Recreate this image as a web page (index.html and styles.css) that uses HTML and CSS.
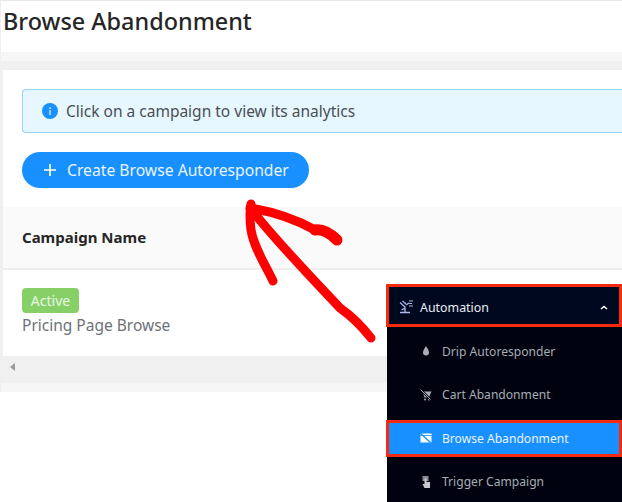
FILE: index.html
```html
<!DOCTYPE html>
<html lang="en">
<head>
<meta charset="utf-8">
<title>Browse Abandonment</title>
<link rel="stylesheet" href="styles.css">
</head>
<body>
<div class="page">
  <header class="page-header"><h1>Browse Abandonment</h1></header>
  <div class="band-dotted"></div>
  <main class="content">
    <section class="card">
      <div class="card-top">
        <div class="alert">
          <svg class="alert-icon" viewBox="0 0 16 16"><circle cx="8" cy="8" r="8" fill="#1890ff"/><rect x="7.1" y="7" width="1.8" height="5" fill="#a9d6ff"/><rect x="7.1" y="4.2" width="1.8" height="1.8" fill="#a9d6ff"/></svg>
          <span>Click on a campaign to view its analytics</span>
        </div>
        <button class="create-btn">
          <svg class="plus" viewBox="0 0 12 12"><path d="M6 0v12M0 6h12" stroke="#fff" stroke-width="1.7" fill="none"/></svg>
          <span>Create Browse Autoresponder</span>
        </button>
      </div>
      <div class="table-head">Campaign Name</div>
      <div class="table-row">
        <span class="badge">Active</span>
        <span class="campaign">Pricing Page Browse</span>
      </div>
    </section>
    <div class="scrollbar"><svg class="scroll-arrow" viewBox="0 0 5 8"><path d="M5 0v8L0 4z" fill="#999"/></svg></div>
  </main>
  <div class="band-dotted bottom"></div>
</div>

<svg class="arrow" viewBox="0 0 150 170">
  <g fill="none" stroke="#f00" stroke-linecap="round" stroke-linejoin="round">
    <path stroke-width="9" d="M21 14 C19 24 20 32 21 40 C24 58 35 74 43 91"/>
    <path stroke-width="9" d="M20 18 C45 22 65 29 85 40"/>
    <path stroke-width="11" d="M85 40 C92 39 100 43 107 50"/>
    <path stroke-width="9" d="M25 24 C50 55 78 84 110 118 C120 125 130 134 141 148"/>
  </g>
</svg>

<nav class="sidebar">
  <div class="nav-item parent">
    <svg class="nav-icon" viewBox="0 0 15 14"><path d="M1 2.500l5 4.500v5M1 12.500h10M6 8L2.500 10M3.500 1l3.500 3M7 5l3-2" stroke="#a9b8e8" stroke-width="1.300" fill="none"/><path d="M10 1h4M10 3.500h3M10 6h4" stroke="#a9b8e8" stroke-width="1.100" fill="none"/></svg>
    <span class="nav-label">Automation</span>
    <svg class="chevron" viewBox="0 0 8 5"><path d="M1 4l3-2.500L7 4" stroke="#fff" stroke-width="1.600" fill="none"/></svg>
  </div>
  <div class="sub-list">
    <div class="nav-item sub">
      <svg class="nav-icon small" viewBox="0 0 12 12"><path d="M6 1C5 3 3 5 3 7.500a3 3 0 0 0 6 0C9 5 7 3 6 1z" fill="#a6adb4"/></svg>
      <span>Drip Autoresponder</span>
    </div>
    <div class="nav-item sub">
      <svg class="nav-icon small" viewBox="0 0 12 12"><path d="M2.500 2.500h9L9 8.500H4.500z" fill="#a6adb4"/><circle cx="5" cy="10.500" r="1" fill="#a6adb4"/><circle cx="9" cy="10.500" r="1" fill="#a6adb4"/><path d="M.5 .5l10 10" stroke="#000514" stroke-width="2.200"/><path d="M.5 .5l10 10" stroke="#a6adb4" stroke-width="1"/></svg>
      <span>Cart Abandonment</span>
    </div>
    <div class="nav-item sub active">
      <svg class="nav-icon small" viewBox="0 0 12 12"><path d="M.5 1.500h11v9H.5z" fill="#fff"/><path d="M.5 3.500h11" stroke="#1890ff" stroke-width=".8"/><path d="M0 1l11 10" stroke="#1890ff" stroke-width="1.300"/></svg>
      <span>Browse Abandonment</span>
    </div>
    <div class="nav-item sub">
      <svg class="nav-icon small" viewBox="0 0 12 12"><path d="M2.500 0h6v5h-6z" fill="#858c93"/><path d="M4.500 2.500h2v3.500h3.500v6H4.500L2.500 8h2z" fill="#c4c9ce"/></svg>
      <span>Trigger Campaign</span>
    </div>
  </div>
</nav>
</body>
</html>
```

FILE: styles.css
```css
* { box-sizing: border-box; }
html, body { margin: 0; padding: 0; height: 100%; overflow: hidden; background: #fff; }
body { font-family: "Noto Sans", "Open Sans", sans-serif; position: relative; }

.page { width: 622px; border-top: 1px solid #e8e8e8; border-left: 1px solid #efefef; }
.page-header { height: 51px; padding: 4px 2px 0; background: #fff; }
.page-header h1 { margin: 0; font-size: 23.400px; line-height: 32px; font-weight: 500; color: #262626; white-space: nowrap; }

.band-dotted { height: 9px; background: #f6f6f6; }
.band-dotted.bottom { height: 9px; }

.content { background: #f0f0f0; padding: 9px 0 0 2px; }
.card { background: #fff; height: 286px; }
.card-top { padding: 19px 0 19px 19px; height: 137px; }

.alert { height: 44px; display: flex; align-items: center; gap: 8px; padding-left: 19px; background: #e6f7ff; border: 1px solid #91d5ff; border-right: 0; border-radius: 4px 0 0 4px; font-size: 15.500px; color: #4a4f55; white-space: nowrap; }
.alert-icon { width: 16px; height: 16px; flex: none; }

.create-btn { margin-top: 19px; width: 287px; height: 36px; display: flex; align-items: center; gap: 11.500px; padding: 0 0 0 21.500px; border: 0; border-radius: 18px; background: #1890ff; color: #e8f4ff; font: inherit; font-size: 15.700px; white-space: nowrap; }
.plus { width: 12px; height: 12px; flex: none; }

.table-head { height: 63px; display: flex; align-items: center; padding: 0 0 2px 19px; background: #fafafa; border-bottom: 2px solid #eeeeee; font-size: 15px; font-weight: 700; color: #262626; }
.table-row { height: 86px; padding: 18px 0 0 19px; display: flex; flex-direction: column; align-items: flex-start; }
.badge { height: 25px; width: 57px; display: flex; align-items: center; justify-content: center; background: #87d068; border-radius: 4px; color: #eaf7e4; font-size: 14px; }
.campaign { font-size: 15.500px; line-height: 24px; color: #6d7278; white-space: nowrap; }

.scrollbar { height: 27px; display: flex; align-items: center; padding: 0 0 6px 7px; }
.scroll-arrow { width: 5px; height: 8px; }

.arrow { position: absolute; left: 230px; top: 190px; width: 150px; height: 170px; }

.sidebar { position: absolute; left: 387px; top: 284px; width: 235px; height: 218px; background: #00030f; font-size: 12.100px; }
.nav-item { display: flex; align-items: center; white-space: nowrap; }
.nav-item.parent { height: 43px; margin-left: -1px; padding: 3px 0 0 10px; gap: 6px; background: #00081f; border: 3px solid #f52a0e; color: #e8edf5; font-size: 12.400px; }
.nav-label { flex: 1; }
.nav-icon { width: 15px; height: 14px; flex: none; }
.nav-icon.small { width: 12px; height: 12px; }
.chevron { width: 8px; height: 5px; margin-right: 11px; }
.sub-list { display: flex; flex-direction: column; gap: 6.500px; padding-top: 5.500px; }
.nav-item.sub { height: 37px; padding-left: 33px; gap: 10px; color: #a6adb4; }
.nav-item.active { margin-left: -1px; padding-left: 31px; background: #1890ff; color: #e8f4ff; border: 3px solid #f52a0e; }
```
